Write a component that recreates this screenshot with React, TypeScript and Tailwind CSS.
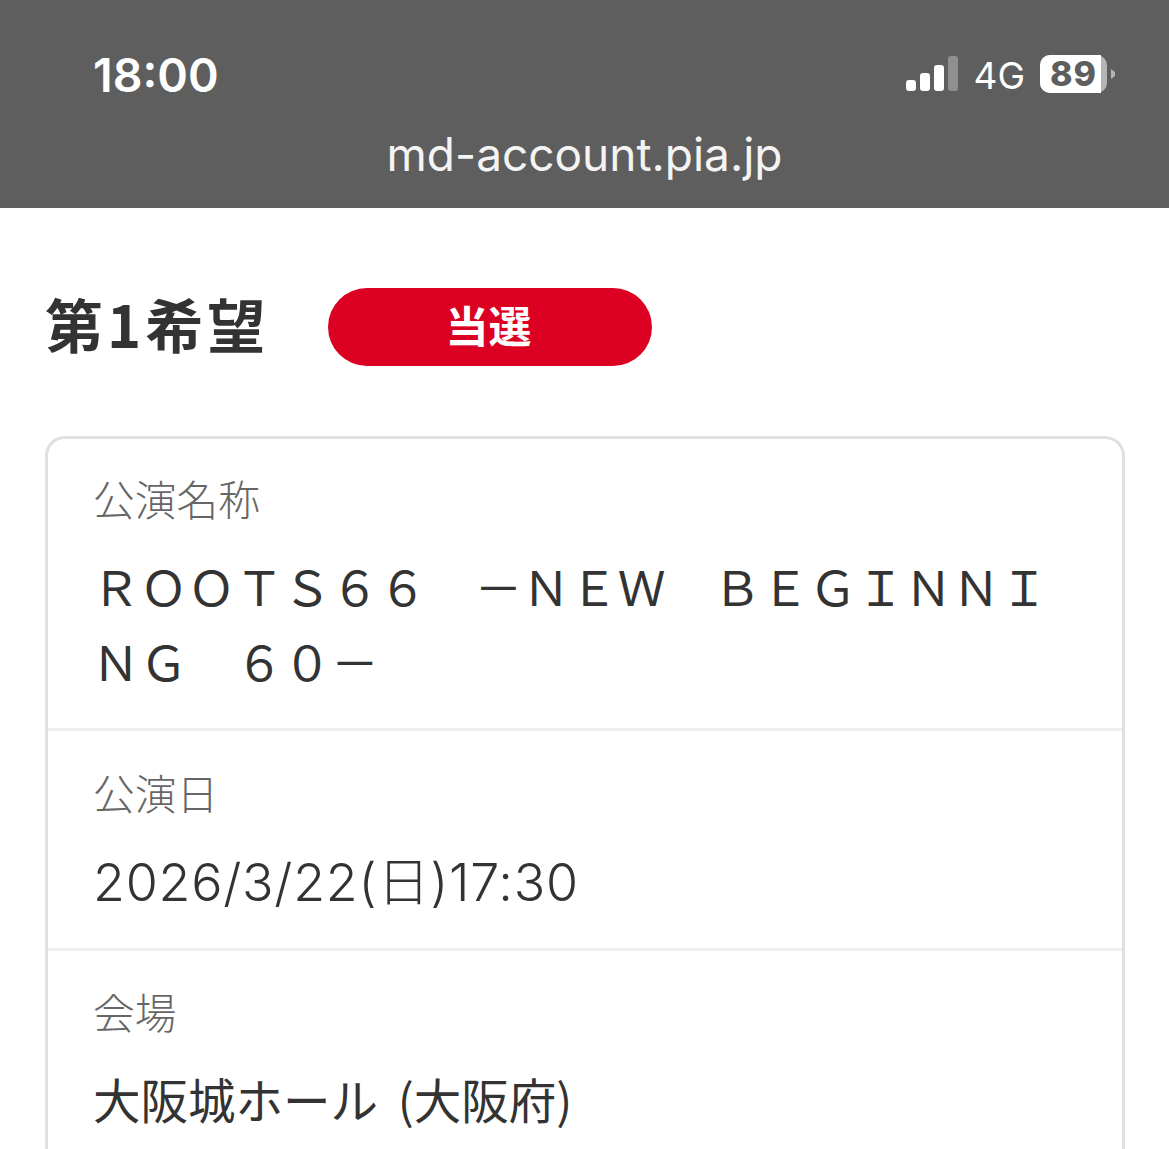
const Row = ({ label, top, children, last }: { label: string; top: string; children: React.ReactNode; last?: boolean }) => (
  <div className={`px-[45px] ${last ? "pb-[40px]" : "border-b-[3px] border-[#efefef]"} ${top}`}>
    <div className="text-[41.75px] leading-[48px] text-[#666666] font-light font-['Noto_Sans_CJK_JP',sans-serif]">{label}</div>
    {children}
  </div>
);

export default function App() {
  return (
    <div className="w-[1169px] h-[1149px] overflow-hidden bg-white font-['Inter','Noto_Sans_CJK_JP',sans-serif]">
      <header className="h-[208px] bg-[#5e5e5e] text-white flex flex-col">
        <div className="h-[127px] pt-[47px] pl-[93px] pr-[53px] flex justify-between items-start">
          <span className="text-[46.5px] leading-[56px] font-semibold">18:00</span>
          <div className="flex items-start gap-[15px] pt-[8px]">
            <svg width="52" height="36" viewBox="0 0 52 36">
              <rect x="0" y="25" width="10" height="11" rx="3" fill="#fff" />
              <rect x="14" y="18" width="10" height="18" rx="3" fill="#fff" />
              <rect x="28" y="10" width="10" height="26" rx="3" fill="#fff" />
              <rect x="42" y="1" width="10" height="35" rx="3" fill="#8f8f8f" />
            </svg>
            <span className="text-[37px] leading-[40px] font-normal pt-px">4G</span>
            <div className="flex items-center w-[76px] h-[38px] gap-[4px]">
              <div className="flex w-[67px] h-[38px] rounded-[10px] bg-[#b5b5b5]">
                <div className="w-[61px] rounded-l-[10px] bg-white pl-[6px] text-center text-[34px] leading-[38px] font-extrabold tracking-[1px] text-[#5e5e5e]">89</div>
              </div>
              <svg width="5" height="10" viewBox="0 0 5 10">
                <path d="M0 0L4 3V7L0 10Z" fill="#b5b5b5" />
              </svg>
            </div>
          </div>
        </div>
        <div className="text-center text-[46px] leading-[54px] font-normal text-[#f4f4f4]">md-account.pia.jp</div>
      </header>
      <main className="pl-[45px] pr-[44px] pt-[80px]">
        <div className="flex items-center gap-[63px] h-[78px]">
          <h1 className="w-[220px] pb-[8px] text-[58px] leading-[78px] font-bold text-[#333333] tracking-[4px] whitespace-nowrap font-['Noto_Sans_CJK_JP',sans-serif]">第1希望</h1>
          <div className="w-[324px] h-[78px] pb-[5px] pr-[3px] rounded-full bg-[#dc0022] text-white text-[43px] font-bold flex items-center justify-center font-['Noto_Sans_CJK_JP',sans-serif]">当選</div>
        </div>
        <section className="mt-[70px] border-[3px] border-b-0 border-[#e0e0e0] rounded-t-[20px]">
          <Row label="公演名称" top="pt-[35px]">
            <div className="mt-[26px] -ml-[1px] pb-[30px] text-[47.8px] leading-[75px] text-[#333333] font-normal font-['Noto_Sans_CJK_JP',sans-serif]">
              <div className="whitespace-nowrap">ＲＯＯＴＳ６６　－ＮＥＷ　ＢＥＧＩＮＮＩ</div>
              <div>ＮＧ　６０－</div>
            </div>
          </Row>
          <Row label="公演日" top="pt-[37px]">
            <div className="mt-[33px] pb-[31px] text-[52px] leading-[68px] tracking-[0.75px] text-[#333333] font-light">2026/3/22(日)17:30</div>
          </Row>
          <Row label="会場" top="pt-[36px]" last>
            <div className="mt-[30px] text-[47.5px] leading-[68px] [word-spacing:9px] text-[#333333] font-normal font-['Noto_Sans_CJK_JP',sans-serif]">大阪城ホール (大阪府)</div>
          </Row>
        </section>
      </main>
    </div>
  );
}
